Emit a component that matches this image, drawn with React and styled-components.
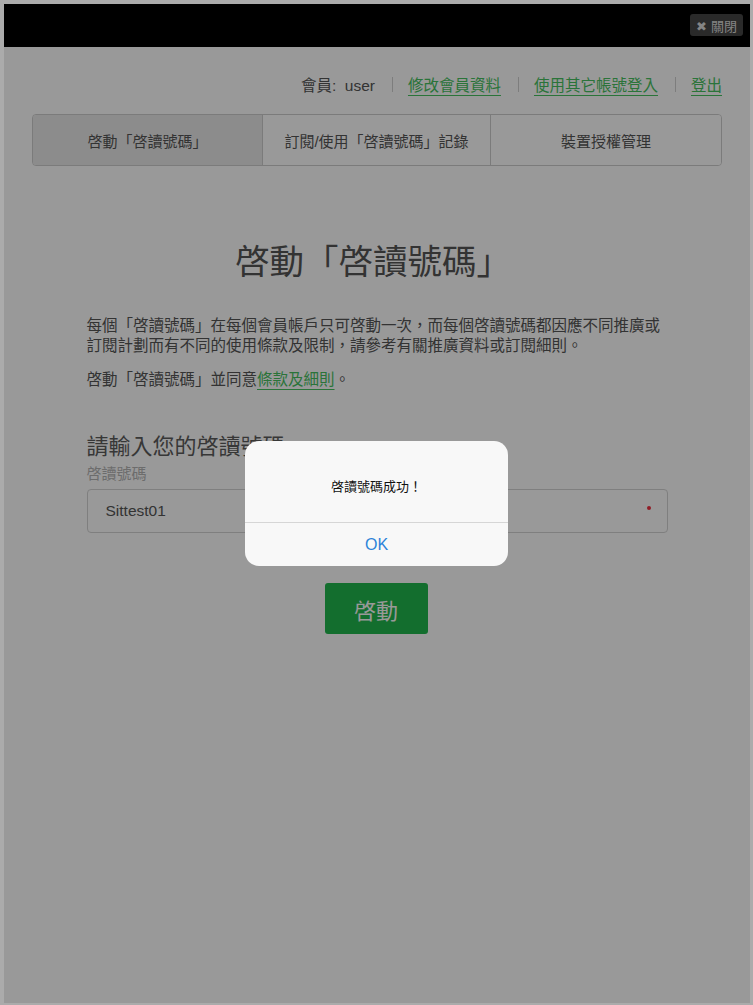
import styled, { createGlobalStyle } from 'styled-components';

const GlobalStyle = createGlobalStyle`
  html, body {
    margin: 0;
    padding: 0;
    background: #ababab;
  }
  body {
    font-family: "Liberation Sans", "Noto Sans CJK TC", sans-serif;
  }
`;

const Shell = styled.div`
  padding: 4px 3px 2px 4px;
  background: #ababab;
  height: 1005px;
  box-sizing: border-box;
`;

const Frame = styled.div`
  position: relative;
  height: 999px;
  background: #fff;
  overflow: hidden;
`;

const TopBar = styled.div`
  height: 43px;
  background: #000;
  display: flex;
  justify-content: flex-end;
  align-items: flex-start;
  padding: 10px 7px 0 0;
  box-sizing: border-box;
`;

const CloseButton = styled.button`
  height: 22px;
  padding: 0 6px;
  border: none;
  border-radius: 3px;
  background: #474747;
  color: #dcdcdc;
  font-family: "Liberation Sans", "Noto Sans CJK TC", sans-serif;
  font-size: 13px;
  display: flex;
  align-items: center;
  gap: 3px;
`;

const MemberRow = styled.div`
  display: flex;
  justify-content: flex-end;
  align-items: center;
  margin: 27px 28px 0;
  height: 20px;
  font-size: 15.5px;
  color: #555;
`;

const Sep = styled.span`
  width: 1px;
  height: 15px;
  background: #d0d0d0;
  margin: 0 15px 0 17px;
`;

const Link = styled.a`
  color: #47c160;
  text-decoration: underline;
  text-underline-offset: 4px;
  cursor: pointer;
`;

const Tabs = styled.div`
  display: grid;
  grid-template-columns: 229px 228px 1fr;
  margin: 20px 28px 0;
  height: 52px;
  border: 1px solid #cdcdcd;
  border-radius: 4px;
  box-sizing: border-box;
  overflow: hidden;
`;

const Tab = styled.div`
  display: flex;
  align-items: center;
  justify-content: center;
  font-size: 15px;
  color: #555;
  background: ${p => (p.$active ? '#e9e9e9' : '#fff')};
  border-left: ${p => (p.$first ? 'none' : '1px solid #cdcdcd')};
`;

const Content = styled.div`
  width: 581px;
  margin: 0 auto;
`;

const Title = styled.h1`
  margin: 76px 0 0;
  padding-right: 8px;
  text-align: center;
  font-size: 34.5px;
  line-height: 40px;
  font-weight: 400;
  color: #555;
`;

const Para = styled.p`
  margin: ${p => p.$top}px 0 0;
  font-size: 15.5px;
  line-height: 20px;
  color: #555;
`;

const Heading = styled.h2`
  margin: 43px 0 0;
  font-size: 22px;
  line-height: 28px;
  font-weight: 400;
  color: #5c5c5c;
`;

const Label = styled.div`
  margin-top: 3px;
  font-size: 15px;
  line-height: 20px;
  color: #b5b5b5;
`;

const InputBox = styled.div`
  position: relative;
  margin-top: 5px;
  height: 44px;
  border: 1px solid #d4d4d4;
  border-radius: 4px;
  box-sizing: border-box;
  display: flex;
  align-items: center;
  padding: 0 18px;
  font-size: 15.5px;
  color: #555;
`;

const Required = styled.span`
  position: absolute;
  right: 16px;
  top: 16px;
  width: 4px;
  height: 4px;
  border-radius: 50%;
  background: #f03040;
`;

const ButtonRow = styled.div`
  display: flex;
  justify-content: center;
  margin-top: 50px;
`;

const SubmitButton = styled.button`
  width: 103px;
  height: 51px;
  border: none;
  border-radius: 3px;
  background: #20b84d;
  color: #fff;
  font-family: "Liberation Sans", "Noto Sans CJK TC", sans-serif;
  font-size: 22px;
  margin-left: -2px;
`;

const Overlay = styled.div`
  position: absolute;
  inset: 0;
  background: rgba(0, 0, 0, 0.4);
`;

const Dialog = styled.div`
  position: absolute;
  top: 437px;
  left: 241px;
  width: 263px;
  border-radius: 14px;
  background: #f8f8f8;
  overflow: hidden;
  text-align: center;
`;

const DialogMessage = styled.div`
  height: 82px;
  display: flex;
  align-items: center;
  justify-content: center;
  font-size: 13px;
  color: #111;
  border-bottom: 1px solid #d6d6d6;
  box-sizing: border-box;
  padding-top: 8px;
`;

const DialogButton = styled.div`
  height: 43px;
  display: flex;
  align-items: center;
  justify-content: center;
  font-size: 16px;
  color: #2d83d8;
`;

export default function App() {
  return (
    <>
      <GlobalStyle />
      <Shell>
        <Frame>
          <TopBar>
            <CloseButton>✖ 關閉</CloseButton>
          </TopBar>
          <MemberRow>
            <span>會員:&nbsp; user</span>
            <Sep />
            <Link>修改會員資料</Link>
            <Sep />
            <Link>使用其它帳號登入</Link>
            <Sep />
            <Link>登出</Link>
          </MemberRow>
          <Tabs>
            <Tab $active $first>啓動「啓讀號碼」</Tab>
            <Tab>訂閱/使用「啓讀號碼」記錄</Tab>
            <Tab>裝置授權管理</Tab>
          </Tabs>
          <Content>
            <Title>啓動「啓讀號碼」</Title>
            <Para $top={34}>
              每個「啓讀號碼」在每個會員帳戶只可啓動一次，而每個啓讀號碼都因應不同推廣或訂閱計劃而有不同的使用條款及限制，請參考有關推廣資料或訂閱細則。
            </Para>
            <Para $top={14}>
              啓動「啓讀號碼」並同意<Link>條款及細則</Link>。
            </Para>
            <Heading>請輸入您的啓讀號碼</Heading>
            <Label>啓讀號碼</Label>
            <InputBox>
              Sittest01
              <Required />
            </InputBox>
            <ButtonRow>
              <SubmitButton>啓動</SubmitButton>
            </ButtonRow>
          </Content>
          <Overlay />
          <Dialog>
            <DialogMessage>啓讀號碼成功！</DialogMessage>
            <DialogButton>OK</DialogButton>
          </Dialog>
        </Frame>
      </Shell>
    </>
  );
}
